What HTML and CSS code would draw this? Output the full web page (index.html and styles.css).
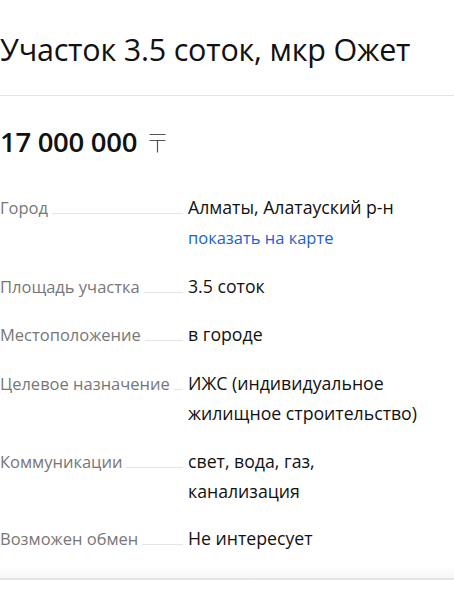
FILE: index.html
```html
<!DOCTYPE html>
<html lang="ru">
<head>
<meta charset="utf-8">
<link rel="stylesheet" href="styles.css">
</head>
<body>
<div class="page">
  <header class="head">
    <h1 class="title">Участок 3.5 соток, мкр Ожет</h1>
  </header>
  <section class="offer">
    <div class="price">17 000 000<svg class="cur" width="17" height="20" viewBox="0 0 17 20" aria-label="₸"><path d="M0.5 1.5H16.5M0.5 7.5H16.5M8.5 7.5V19.5" fill="none" stroke="#555" stroke-width="1.2"/></svg></div>
    <dl class="params">
      <div class="row">
        <dt class="label"><span>Город</span></dt>
        <dd class="value">Алматы, Алатауский р-н<br><a class="map" href="#">показать на карте</a></dd>
      </div>
      <div class="row">
        <dt class="label"><span>Площадь участка</span></dt>
        <dd class="value">3.5 соток</dd>
      </div>
      <div class="row">
        <dt class="label"><span>Местоположение</span></dt>
        <dd class="value">в городе</dd>
      </div>
      <div class="row">
        <dt class="label"><span>Целевое назначение</span></dt>
        <dd class="value">ИЖС (индивидуальное жилищное строительство)</dd>
      </div>
      <div class="row">
        <dt class="label"><span>Коммуникации</span></dt>
        <dd class="value">свет, вода, газ, канализация</dd>
      </div>
      <div class="row">
        <dt class="label"><span>Возможен обмен</span></dt>
        <dd class="value">Не интересует</dd>
      </div>
    </dl>
  </section>
  <div class="foot"></div>
</div>
</body>
</html>
```

FILE: styles.css
```css
html, body {
  margin: 0;
  padding: 0;
  background: #fff;
}
body {
  font-family: "Open Sans", "Noto Sans", sans-serif;
  color: #111;
}
.page {
  width: 454px;
}
.head {
  height: 96px;
  border-bottom: 1px solid #e6e6e6;
  box-sizing: border-box;
  padding-top: 28px;
}
.title {
  margin: 0;
  font-size: 30.5px;
  font-weight: 400;
  line-height: 42px;
  letter-spacing: -0.2px;
}
.offer {
  padding-top: 26px;
}
.price {
  font-size: 27.5px;
  font-weight: 600;
  line-height: 40px;
  letter-spacing: -0.3px;
  display: flex;
  align-items: center;
}
.cur {
  margin-left: 12px;
  margin-top: 2px;
}
.params {
  margin: 30px 0 0;
  padding: 0;
}
.row {
  display: flex;
  margin-bottom: 17.7px;
  font-size: 17.7px;
  line-height: 30px;
}
.row:last-child {
  margin-bottom: 18px;
}
.label {
  width: 183px;
  flex: none;
  margin-right: 5px;
  color: #777;
  font-size: 16.5px;
  display: flex;
  align-items: baseline;
}
.label span {
  white-space: nowrap;
}
.label::after {
  content: "";
  flex: 1;
  margin-left: 4px;
  border-bottom: 1px solid #e6e6e6;
  height: 21px;
}
.value {
  margin: 0;
  width: 236px;
}
.map {
  color: #1a62d6;
  text-decoration: none;
  font-size: 16.5px;
}
.foot {
  height: 12px;
  margin-top: -6px;
  background: linear-gradient(#fff, #f6f6f6);
  border-bottom: 2px solid #e4e4e4;
}
```
